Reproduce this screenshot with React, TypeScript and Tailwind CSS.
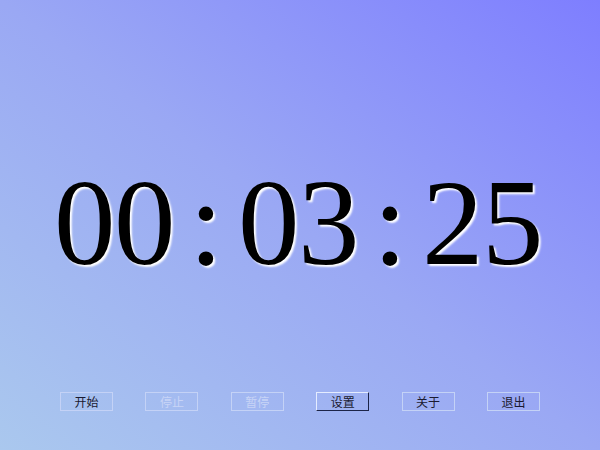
const TIME = '00:03:25';

const BUTTONS = [
  { label: '开始', disabled: false, focused: false },
  { label: '停止', disabled: true, focused: false },
  { label: '暂停', disabled: true, focused: false },
  { label: '设置', disabled: false, focused: true },
  { label: '关于', disabled: false, focused: false },
  { label: '退出', disabled: false, focused: false },
];

export default function App() {
  return (
    <div className="flex h-[450px] w-[600px] flex-col overflow-hidden bg-[linear-gradient(to_top_right,#aac8ee,#9aa8f4_50%,#7e7eff)]">
      <div className="mt-[161px] flex pl-[54px] font-['Liberation_Serif',serif] text-[123px] leading-none text-black [text-shadow:2px_2px_2px_#ffffff]">
        {TIME.split('').map((ch, i) => (
          <span
            key={i}
            className={ch === ':' ? 'w-[64px] text-center' : 'w-[60px] text-center'}
          >
            {ch}
          </span>
        ))}
      </div>

      <div className="mt-[108px] flex gap-[32.4px] pl-[60px] font-['Noto_Sans_CJK_SC',sans-serif] text-[12px]">
        {BUTTONS.map((b) => (
          <button
            key={b.label}
            className={
              b.focused
                ? 'flex h-[19px] w-[53px] items-center justify-center border border-t-[#e4ecff] border-l-[#e4ecff] border-r-[#1c2448] border-b-[#1c2448] text-[#1a1a30]'
                : b.disabled
                  ? 'flex h-[19px] w-[53px] items-center justify-center border border-[#c4d2f6] text-[#c8d4f6]'
                  : 'flex h-[19px] w-[53px] items-center justify-center border border-[#c4d2f6] text-[#1a1a30]'
            }
          >
            {b.label}
          </button>
        ))}
      </div>
    </div>
  );
}
